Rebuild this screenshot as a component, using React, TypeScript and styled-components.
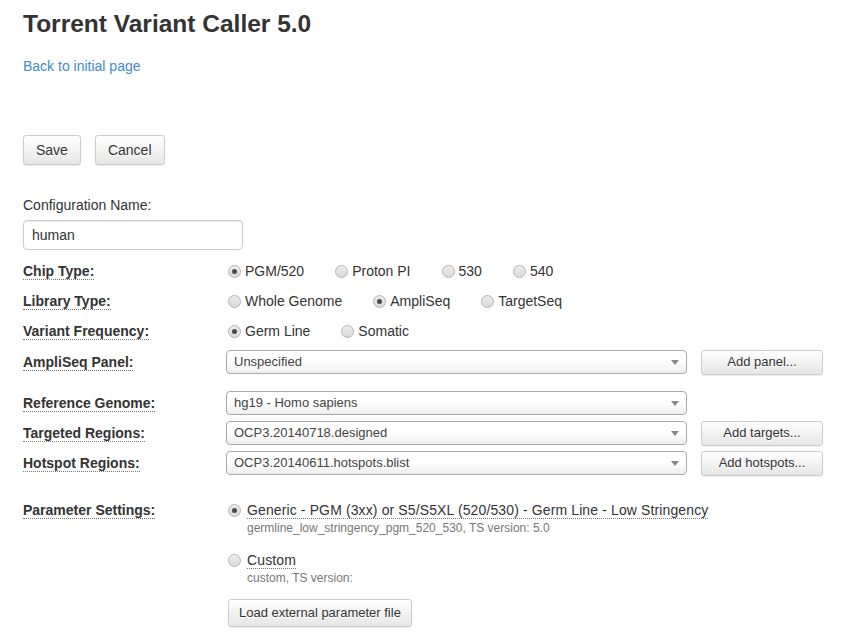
import React from "react";
import styled, { createGlobalStyle, css } from "styled-components";

const GlobalStyle = createGlobalStyle`
  html, body {
    margin: 0;
    background: #fff;
  }
  body {
    font-family: "Liberation Sans", Arial, sans-serif;
    font-size: 14px;
    line-height: 20px;
    color: #333;
  }
`;

const Page = styled.div`
  padding: 0 23px 20px;
  width: 845px;
  box-sizing: border-box;
`;

const Title = styled.h1`
  margin: 11px 0 0;
  font-size: 24.5px;
  line-height: 26px;
  font-weight: bold;
  color: #333;
`;

const BackLink = styled.a`
  display: inline-block;
  margin-top: 19px;
  color: #428bca;
  text-decoration: none;
`;

const Toolbar = styled.div`
  display: flex;
  gap: 14px;
  margin-top: 59px;
`;

const Button = styled.button<{ $small?: boolean; $wide?: boolean }>`
  font-family: inherit;
  font-size: 14px;
  line-height: 20px;
  color: #333;
  height: 30px;
  padding: 0 12px;
  border: 1px solid #ccc;
  border-radius: 3px;
  background: linear-gradient(to bottom, #fff 0%, #e6e6e6 100%);
  box-shadow: 0 1px 1px rgba(0, 0, 0, 0.075);
  text-shadow: 0 1px 0 #fff;
  cursor: pointer;
  ${(p) =>
    p.$small &&
    css`
      font-size: 13px;
      height: 28px;
      padding: 0 10px;
    `}
  ${(p) =>
    p.$wide &&
    css`
      font-size: 13px;
      height: 25px;
      width: 122px;
      padding: 0;
    `}
`;

const FieldLabel = styled.div`
  margin-top: 30px;
`;

const TextInput = styled.input`
  display: block;
  margin-top: 5px;
  width: 220px;
  height: 30px;
  box-sizing: border-box;
  padding: 0 8px;
  font-family: inherit;
  font-size: 14px;
  color: #333;
  border: 1px solid #ccc;
  border-radius: 4px;
  box-shadow: inset 0 1px 1px rgba(0, 0, 0, 0.075);
  outline: none;
`;

const Rows = styled.div`
  margin-top: 6px;
`;

const FormRow = styled.div<{ $gapBefore?: number; $gapAfter?: number }>`
  display: grid;
  grid-template-columns: 203px 1fr;
  align-items: center;
  height: 30px;
  margin-top: ${(p) => p.$gapBefore ?? 0}px;
  margin-bottom: ${(p) => p.$gapAfter ?? 0}px;
`;

const RowLabel = styled.div`
  font-weight: bold;
`;

const Dotted = styled.span`
  border-bottom: 1px dotted #777;
`;

const RadioGroup = styled.div`
  display: flex;
  align-items: center;
  padding-left: 2px;
`;

const RadioOption = styled.label`
  display: flex;
  align-items: center;
  margin-right: 31px;
`;

const RadioDot = styled.span<{ $checked?: boolean; $gap?: number }>`
  position: relative;
  width: 11px;
  height: 11px;
  border-radius: 50%;
  border: 1px solid #b4b4b4;
  background: linear-gradient(to bottom, #ececec, #dadada);
  margin-right: ${(p) => p.$gap ?? 4}px;
  flex: none;
  ${(p) =>
    p.$checked &&
    css`
      &::after {
        content: "";
        position: absolute;
        left: 3px;
        top: 3px;
        width: 5px;
        height: 5px;
        border-radius: 50%;
        background: #4a4a4a;
      }
    `}
`;

const SelectLine = styled.div`
  display: flex;
  align-items: center;
  gap: 14px;
`;

const SelectBox = styled.div`
  position: relative;
  width: 461px;
  height: 24px;
  box-sizing: border-box;
  padding-left: 7px;
  border: 1px solid #aaa;
  border-radius: 4px;
  background: linear-gradient(to bottom, #fff 0%, #fff 45%, #eee 100%);
  font-size: 13px;
  line-height: 22px;
  color: #444;
  &::after {
    content: "";
    position: absolute;
    right: 7px;
    top: 9px;
    border-left: 4px solid transparent;
    border-right: 4px solid transparent;
    border-top: 5px solid #888;
  }
`;

const ParamRow = styled.div`
  display: grid;
  grid-template-columns: 203px 1fr;
  margin-top: 22px;
`;

const ParamOptions = styled.div`
  padding-left: 2px;
`;

const ParamOption = styled.div<{ $spaced?: boolean }>`
  display: grid;
  grid-template-columns: 19px 1fr;
  margin-top: ${(p) => (p.$spaced ? 13 : 0)}px;
`;

const ParamRadioCell = styled.div`
  display: flex;
  align-items: center;
  height: 20px;
`;

const ParamTitle = styled(Dotted)`
  letter-spacing: 0.12px;
`;

const ParamSub = styled.div`
  font-size: 12px;
  line-height: 17px;
  color: #777;
`;

const ParamButton = styled.div`
  margin-top: 12px;
`;

type Radio = { label: string; checked?: boolean };

const radioRows: { label: string; options: Radio[] }[] = [
  {
    label: "Chip Type:",
    options: [
      { label: "PGM/520", checked: true },
      { label: "Proton PI" },
      { label: "530" },
      { label: "540" },
    ],
  },
  {
    label: "Library Type:",
    options: [
      { label: "Whole Genome" },
      { label: "AmpliSeq", checked: true },
      { label: "TargetSeq" },
    ],
  },
  {
    label: "Variant Frequency:",
    options: [{ label: "Germ Line", checked: true }, { label: "Somatic" }],
  },
];

const selectRows: {
  label: string;
  value: string;
  action?: string;
  before?: number;
  after?: number;
}[] = [
  { label: "AmpliSeq Panel:", value: "Unspecified", action: "Add panel...", before: 1, after: 11 },
  { label: "Reference Genome:", value: "hg19 - Homo sapiens" },
  { label: "Targeted Regions:", value: "OCP3.20140718.designed", action: "Add targets..." },
  { label: "Hotspot Regions:", value: "OCP3.20140611.hotspots.blist", action: "Add hotspots..." },
];

export default function App() {
  return (
    <>
      <GlobalStyle />
      <Page>
        <Title>Torrent Variant Caller 5.0</Title>
        <BackLink href="#">Back to initial page</BackLink>

        <Toolbar>
          <Button>Save</Button>
          <Button>Cancel</Button>
        </Toolbar>

        <FieldLabel>Configuration Name:</FieldLabel>
        <TextInput defaultValue="human" />

        <Rows>
          {radioRows.map((row) => (
            <FormRow key={row.label}>
              <RowLabel>
                <Dotted>{row.label}</Dotted>
              </RowLabel>
              <RadioGroup>
                {row.options.map((o) => (
                  <RadioOption key={o.label}>
                    <RadioDot $checked={o.checked} />
                    {o.label}
                  </RadioOption>
                ))}
              </RadioGroup>
            </FormRow>
          ))}

          {selectRows.map((row) => (
            <FormRow key={row.label} $gapBefore={row.before} $gapAfter={row.after}>
              <RowLabel>
                <Dotted>{row.label}</Dotted>
              </RowLabel>
              <SelectLine>
                <SelectBox>{row.value}</SelectBox>
                {row.action && <Button $wide>{row.action}</Button>}
              </SelectLine>
            </FormRow>
          ))}

          <ParamRow>
            <RowLabel>
              <Dotted>Parameter Settings:</Dotted>
            </RowLabel>
            <ParamOptions>
              <ParamOption>
                <ParamRadioCell>
                  <RadioDot $checked />
                </ParamRadioCell>
                <div>
                  <ParamTitle>Generic - PGM (3xx) or S5/S5XL (520/530) - Germ Line - Low Stringency</ParamTitle>
                  <ParamSub>germline_low_stringency_pgm_520_530, TS version: 5.0</ParamSub>
                </div>
              </ParamOption>
              <ParamOption $spaced>
                <ParamRadioCell>
                  <RadioDot />
                </ParamRadioCell>
                <div>
                  <ParamTitle>Custom</ParamTitle>
                  <ParamSub>custom, TS version:</ParamSub>
                </div>
              </ParamOption>
              <ParamButton>
                <Button $small>Load external parameter file</Button>
              </ParamButton>
            </ParamOptions>
          </ParamRow>
        </Rows>
      </Page>
    </>
  );
}
